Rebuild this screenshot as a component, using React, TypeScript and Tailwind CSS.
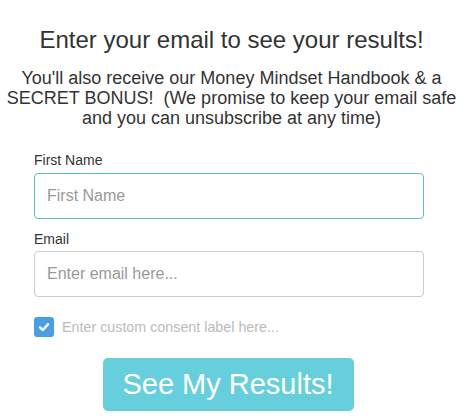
const App = () => {
  return (
    <div className="min-h-screen bg-white font-['Liberation_Sans',Arial,sans-serif] text-[#333]">
      <div className="px-[4px] pt-[26px] text-center">
        <h1 className="text-[24px] leading-[28px] text-[#333]">Enter your email to see your results!</h1>
        <p className="mt-[14px] text-[18px] leading-[20px] text-[#333]">
          You'll also receive our Money Mindset Handbook &amp; a SECRET BONUS!&nbsp; (We promise to keep your email safe and you can unsubscribe at any time)
        </p>
      </div>

      <form className="ml-[34px] mt-[24px] w-[390px]" onSubmit={(e) => e.preventDefault()}>
        <label className="block text-[14px] leading-[16px] text-[#333]">First Name</label>
        <input
          type="text"
          placeholder="First Name"
          className="mt-[5px] block h-[46px] w-full rounded-[4px] border border-[#5bbfc9] px-[12px] text-[16px] text-[#333] outline-none placeholder:text-[#999]"
        />

        <label className="mt-[12px] block text-[14px] leading-[16px] text-[#333]">Email</label>
        <input
          type="email"
          placeholder="Enter email here..."
          className="mt-[4px] block h-[46px] w-full rounded-[4px] border border-[#ccc] px-[12px] text-[16px] text-[#333] outline-none placeholder:text-[#999]"
        />

        <div className="mt-[20px] flex items-center gap-[8px]">
          <span className="flex h-[20px] w-[20px] items-center justify-center rounded-[3px] bg-[#4a9ee3]">
            <svg width="14" height="14" viewBox="0 0 14 14" fill="none">
              <path d="M3 7.3 L5.9 10 L11 4.2" stroke="white" strokeWidth="2.4" strokeLinecap="round" strokeLinejoin="round" />
            </svg>
          </span>
          <span className="text-[14.3px] leading-[20px] text-[#bbb]">Enter custom consent label here...</span>
        </div>

        <div className="mt-[21px] flex justify-center pr-[2px]">
          <button
            type="submit"
            className="h-[53px] w-[251px] rounded-[5px] bg-[#66cfdb] text-[29px] leading-none text-white"
          >
            See My Results!
          </button>
        </div>
      </form>
    </div>
  );
};

export default App;
